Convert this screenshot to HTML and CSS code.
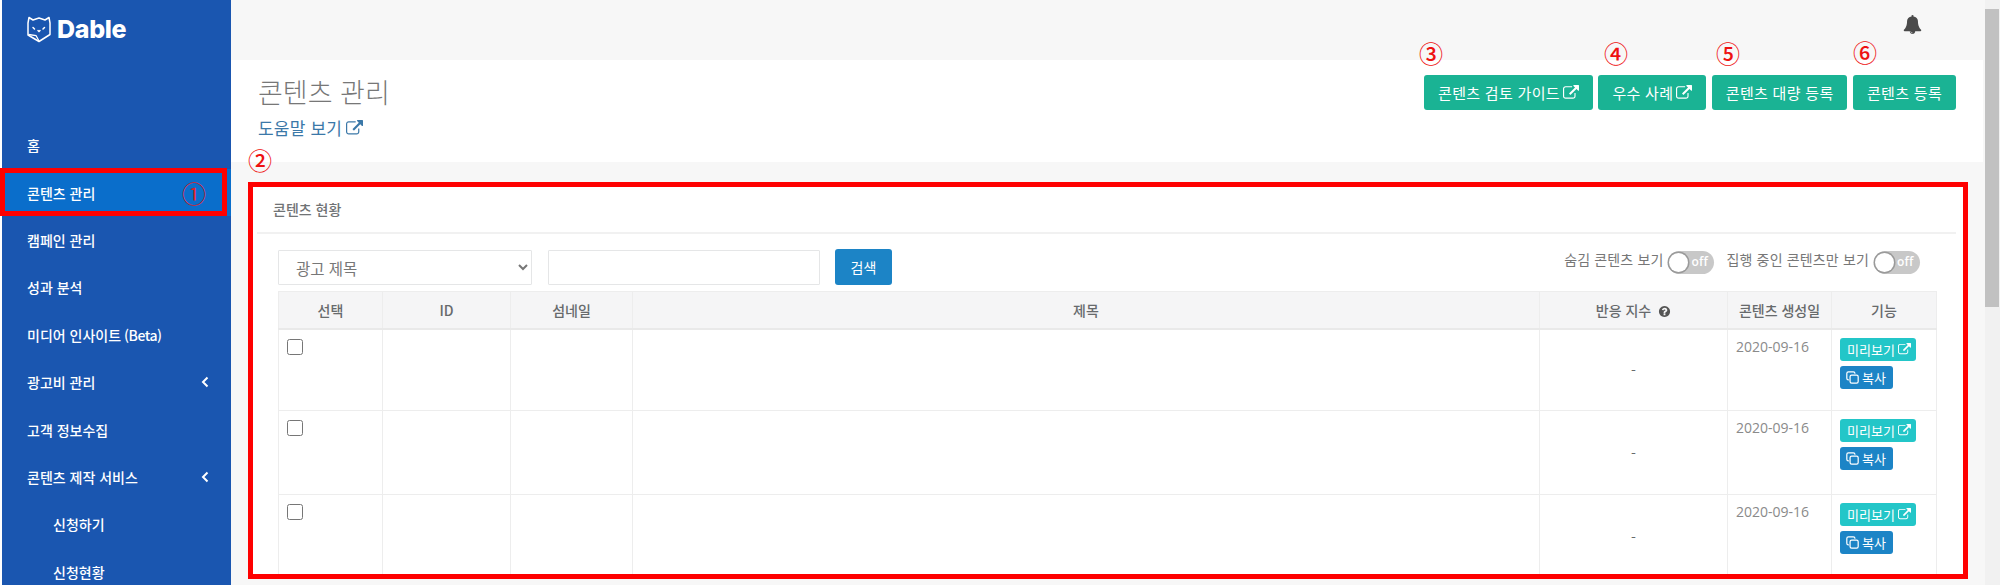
FILE: index.html
```html
<!DOCTYPE html>
<html lang="ko">
<head>
<meta charset="utf-8">
<title>콘텐츠 관리</title>
<link rel="stylesheet" href="styles.css">
</head>
<body>
<svg class="defs" width="0" height="0" aria-hidden="true">
  <symbol id="ext" viewBox="0 0 1792 1792"><path d="M1408 928v320q0 119-84.500 203.500t-203.500 84.500h-832q-119 0-203.500-84.500t-84.500-203.500v-832q0-119 84.500-203.500t203.500-84.500h704q14 0 23 9t9 23v64q0 14-9 23t-23 9h-704q-66 0-113 47t-47 113v832q0 66 47 113t113 47h832q66 0 113-47t47-113v-320q0-14 9-23t23-9h64q14 0 23 9t9 23zm384-864v512q0 26-19 45t-45 19-45-19l-176-176-652 652q-10 10-23 10t-23-10l-114-114q-10-10-10-23t10-23l652-652-176-176q-19-19-19-45t19-45 45-19h512q26 0 45 19t19 45z"/></symbol>
  <symbol id="clone" viewBox="0 0 16 16"><path d="M11 3.500V3a2 2 0 0 0-2-2H3a2 2 0 0 0-2 2v6a2 2 0 0 0 2 2h.5" fill="none" stroke="currentColor" stroke-width="1.500"/><rect x="5" y="5" width="10" height="10" rx="2" fill="none" stroke="currentColor" stroke-width="1.500"/></symbol>
  <symbol id="chev" viewBox="0 0 8 12"><path d="M6.500 1.500 2 6l4.500 4.500" fill="none" stroke="currentColor" stroke-width="2"/></symbol>
</svg>
<div class="app">
  <aside class="sidebar">
    <div class="logo">
      <svg class="logo-mark" viewBox="0 0 24 28" aria-hidden="true"><path d="M2 2.500 6 5 12 3 18 5 22 2.500 23 8V19.500L12 26.500 1 20V8Z" fill="none" stroke="#fff" stroke-width="1.500" stroke-linejoin="round"/><path d="M1.500 19.500 9 20.500 12 26" fill="none" stroke="#fff" stroke-width="1.300"/><path d="M6 12.500 7.500 14M17.500 12.500 16 14M11 15.500l1 1 1-1" fill="none" stroke="#fff" stroke-width="1.500" stroke-linecap="round"/></svg>
      <span class="logo-text">Dable</span>
    </div>
    <nav class="nav">
      <a class="nav-item">홈</a>
      <a class="nav-item active">콘텐츠 관리</a>
      <a class="nav-item">캠페인 관리</a>
      <a class="nav-item">성과 분석</a>
      <a class="nav-item">미디어 인사이트 <span class="beta">(Beta)</span></a>
      <a class="nav-item">광고비 관리<svg class="chev"><use href="#chev"/></svg></a>
      <a class="nav-item">고객 정보수집</a>
      <a class="nav-item">콘텐츠 제작 서비스<svg class="chev"><use href="#chev"/></svg></a>
      <a class="nav-item sub">신청하기</a>
      <a class="nav-item sub">신청현황</a>
    </nav>
  </aside>
  <main class="main">
    <header class="topbar">
      <svg class="bell" viewBox="0 0 1792 1792" aria-hidden="true"><path d="M912 1696q0-16-16-16-59 0-101.500-42.500t-42.500-101.500q0-16-16-16t-16 16q0 73 51.500 124.500t124.500 51.500q16 0 16-16zm816-288q0 52-38 90t-90 38h-448q0 106-75 181t-181 75-181-75-75-181h-448q-52 0-90-38t-38-90q50-42 91-88t85-119.500 74.500-158.500 50-206 19.500-260q0-152 117-282.500t307-158.500q-8-19-8-39 0-40 28-68t68-28 68 28 28 68q0 20-8 39 190 28 307 158.500t117 282.500q0 139 19.500 260t50 206 74.500 158.500 85 119.500 91 88z"/></svg>
    </header>
    <section class="page-head">
      <div class="head-left">
        <h1 class="title">콘텐츠 관리</h1>
        <a class="help">도움말 보기<svg class="ext"><use href="#ext"/></svg></a>
      </div>
      <div class="head-actions">
        <a class="btn">콘텐츠 검토 가이드<svg class="ext"><use href="#ext"/></svg></a>
        <a class="btn">우수 사례<svg class="ext"><use href="#ext"/></svg></a>
        <a class="btn">콘텐츠 대량 등록</a>
        <a class="btn">콘텐츠 등록</a>
      </div>
    </section>
    <section class="card">
      <h2 class="card-title">콘텐츠 현황</h2>
      <div class="card-body">
        <div class="filters">
          <select class="select"><option>광고 제목</option></select>
          <input class="search" type="text" aria-label="검색어">
          <button class="search-btn">검색</button>
          <div class="toggles">
            <span class="toggle-label">숨김 콘텐츠 보기</span>
            <span class="toggle"><i class="knob"></i>off</span>
            <span class="toggle-label second">집행 중인 콘텐츠만 보기</span>
            <span class="toggle"><i class="knob"></i>off</span>
          </div>
        </div>
        <table class="table">
          <colgroup>
            <col class="c1"><col class="c2"><col class="c3"><col class="c4"><col class="c5"><col class="c6"><col class="c7">
          </colgroup>
          <thead>
            <tr>
              <th>선택</th><th>ID</th><th>섬네일</th><th>제목</th>
              <th>반응 지수<svg class="q" viewBox="0 0 1792 1792" aria-hidden="true"><path d="M1024 1376v-192q0-14-9-23t-23-9h-192q-14 0-23 9t-9 23v192q0 14 9 23t23 9h192q14 0 23-9t9-23zm256-672q0-88-55.500-163t-138.500-116-170-41q-243 0-371 213-15 24 8 42l132 100q7 6 19 6 16 0 25-12 53-68 86-92 34-24 86-24 48 0 85.500 26t37.500 59q0 38-20 61t-68 45q-63 28-115.500 86.500t-52.500 125.500v36q0 14 9 23t23 9h192q14 0 23-9t9-23q0-19 21.500-49.500t54.500-49.500q32-18 49-28.500t46-35 44.500-48 28-60.500 12.500-81zm384 192q0 209-103 385.500t-279.500 279.500-385.500 103-385.500-103-279.500-279.500-103-385.500 103-385.500 279.500-279.500 385.500-103 385.500 103 279.500 279.500 103 385.500z"/></svg></th>
              <th>콘텐츠 생성일</th><th>기능</th>
            </tr>
          </thead>
          <tbody>
            <tr class="row1">
              <td><input class="check" type="checkbox" aria-label="선택"></td><td></td><td></td><td></td>
              <td class="score">-</td><td class="date">2020-09-16</td>
              <td class="acts"><a class="mini preview">미리보기<svg class="ext"><use href="#ext"/></svg></a><a class="mini copy"><svg class="clone"><use href="#clone"/></svg>복사</a></td>
            </tr>
            <tr class="row2">
              <td><input class="check" type="checkbox" aria-label="선택"></td><td></td><td></td><td></td>
              <td class="score">-</td><td class="date">2020-09-16</td>
              <td class="acts"><a class="mini preview">미리보기<svg class="ext"><use href="#ext"/></svg></a><a class="mini copy"><svg class="clone"><use href="#clone"/></svg>복사</a></td>
            </tr>
            <tr class="row3">
              <td><input class="check" type="checkbox" aria-label="선택"></td><td></td><td></td><td></td>
              <td class="score">-</td><td class="date">2020-09-16</td>
              <td class="acts"><a class="mini preview">미리보기<svg class="ext"><use href="#ext"/></svg></a><a class="mini copy"><svg class="clone"><use href="#clone"/></svg>복사</a></td>
            </tr>
          </tbody>
        </table>
      </div>
    </section>
  </main>
  <div class="scrollbar"><div class="arrow"></div><div class="thumb"></div></div>

  <div class="mark-box box-nav"></div>
  <div class="mark-box box-card"></div>
  <span class="num n1">①</span>
  <span class="num n2">②</span>
  <span class="num n3">③</span>
  <span class="num n4">④</span>
  <span class="num n5">⑤</span>
  <span class="num n6">⑥</span>
</div>
</body>
</html>
```
FILE: styles.css
```css
* { box-sizing: border-box; }
html, body { margin: 0; height: 585px; overflow: hidden; }
body {
  font-family: "Noto Sans CJK KR", "Open Sans", sans-serif;
  font-size: 14px;
  color: #676a6c;
  background: #fff;
}
.defs { position: absolute; }
.app { position: relative; display: flex; height: 585px; padding-left: 2px; overflow: hidden; background: #fff; }

/* sidebar */
.sidebar { flex: 0 0 229px; background: #1a56b0; color: #fff; }
.logo { display: flex; align-items: flex-start; gap: 6px; height: 121.500px; padding: 15px 0 0 25px; }
.logo-mark { width: 24px; height: 28px; flex: none; }
.logo-text { font-family: Inter, "Liberation Sans", sans-serif; font-weight: 800; font-size: 25px; line-height: 29px; letter-spacing: -0.3px; }
.nav { display: flex; flex-direction: column; }
.nav-item { display: flex; align-items: center; justify-content: space-between; height: 47.400px; padding: 0 22px 0 25px; font-size: 14px; font-weight: 500; color: #fff; white-space: nowrap; }
.nav-item.active { background: #0a6ecb; }
.nav-item.sub { padding-left: 51px; }
.beta { margin-left: 3px; margin-right: auto; letter-spacing: -0.5px; }
.chev { width: 8px; height: 12px; color: #fff; }

/* main */
.main { flex: 1 1 auto; min-width: 0; background: #f7f7f7; }
.topbar { display: flex; justify-content: flex-end; align-items: center; height: 60px; padding: 0 63px 12px 0; }
.bell { width: 19px; height: 19px; fill: #4a4a4a; }
.page-head { display: flex; justify-content: space-between; height: 102px; margin-right: 2px; padding: 14px 27px 0 27px; background: #fff; }
.title { margin: 0; font-size: 27px; line-height: 36px; font-weight: 300; color: #777; }
.help { display: flex; align-items: center; gap: 4px; margin-top: 7px; font-size: 17px; line-height: 22px; letter-spacing: 0.2px; color: #3b78a8; }
.help .ext { width: 17px; height: 17px; fill: #3b78a8; }
.head-actions { display: flex; gap: 5.500px; height: 35px; margin-top: 1px; }
.btn { display: flex; align-items: center; gap: 3px; height: 35px; padding: 0 14px; background: #1ab394; color: #fff; border-radius: 3px; font-size: 15px; letter-spacing: 0.3px; white-space: nowrap; }
.btn .ext { width: 16px; height: 16px; fill: #fff; }

/* card */
.card { margin: 23px 22px 0; padding: 0 7px 0 4px; background: #fff; }
.card-title { margin: 0; height: 49px; padding: 10px 0 0 16px; border-bottom: 2px solid #f1f1f1; font-size: 14px; line-height: 28px; font-weight: 500; color: #707375; }
.card-body { padding: 0 20px 0 21px; }
.filters { display: flex; align-items: flex-start; height: 57px; padding-top: 16px; }
.select { width: 254px; height: 35px; padding-left: 13px; border: 1px solid #e5e6e7; border-radius: 1px; background: #fff; font-family: inherit; font-size: 15.500px; color: #777; }
.search { width: 272px; height: 35px; margin-left: 16px; border: 1px solid #e5e6e7; border-radius: 1px; background: #fff; }
.search-btn { width: 57px; height: 36px; margin-left: 15px; margin-top: -1px; border: 0; border-radius: 3px; background: #1c84c6; color: #fff; font: inherit; padding: 0; }
.toggles { display: flex; align-items: center; margin-left: auto; margin-right: 16px; height: 24px; letter-spacing: 0.15px; }
.toggle-label { line-height: 20px; margin-top: -6px; white-space: nowrap; color: #777; }
.toggle-label.second { margin-left: 12px; }
.toggle { position: relative; display: block; width: 46px; height: 23px; margin-left: 5px; padding-left: 23px; border-radius: 12px; background: #c8c8c8; color: #fff; font-size: 12px; line-height: 22px; font-weight: 600; font-family: "Open Sans", sans-serif; }
.knob { position: absolute; left: 1px; top: 2px; width: 19px; height: 19px; border-radius: 50%; background: #fff; box-shadow: 0 0 0 1.500px #9a9a9a; }

/* table */
.table { width: 1658px; table-layout: fixed; border-collapse: collapse; }
.c1 { width: 104px; } .c2 { width: 128px; } .c3 { width: 122px; } .c4 { width: 907px; } .c5 { width: 188px; } .c6 { width: 104px; } .c7 { width: 105px; }
th, td { border: 1px solid #ededed; vertical-align: top; padding: 0; }
th { height: 37px; background: #f5f5f6; border-bottom: 2px solid #e9e9e9; font-size: 14px; font-weight: 500; text-align: center; vertical-align: middle; color: #676a6c; white-space: nowrap; }
.q { width: 13px; height: 13px; margin-left: 7px; vertical-align: -2px; fill: #555; }
.row1 { height: 82px; } .row2 { height: 84px; } .row3 { height: 84px; }
.check { display: block; width: 16px; height: 16px; margin: 9px 0 0 8px; }
.score { text-align: center; vertical-align: middle; }
.date { padding: 7px 0 0 8px; font-family: "Open Sans", sans-serif; font-size: 14px; line-height: 20px; color: #8a8a8a; }
.acts { padding: 8px 0 0 8px; }
.mini { display: flex; align-items: center; width: max-content; height: 23px; padding: 0 5px 0 7px; border-radius: 3px; color: #fff; font-size: 13px; white-space: nowrap; }
.preview { background: #23c6c8; gap: 3px; }
.copy { margin-top: 5px; background: #1c84c6; gap: 3px; padding: 0 7px 0 6px; }
.mini .ext { width: 13px; height: 13px; fill: #fff; }
.clone { width: 13px; height: 13px; color: #fff; }

/* scrollbar */
.scrollbar { flex: 0 0 15px; background: #f1f1f1; }
.arrow { height: 9px; }
.thumb { width: 14px; height: 298px; background: #c1c1c1; }

/* annotation overlay */
.mark-box { position: absolute; border: 5px solid #fe0000; pointer-events: none; }
.box-nav { left: 0; top: 168px; width: 227px; height: 48px; }
.box-card { left: 248px; top: 182px; width: 1720px; height: 397px; }
.num { position: absolute; width: 24px; text-align: center; margin-left: -12px; font-size: 24px; line-height: 24px; color: #ee1111; font-weight: 500; }
.n1 { left: 194px; top: 181px; color: #d9232e; font-weight: 400; }
.n2 { left: 260px; top: 148px; }
.n3 { left: 1431px; top: 41px; }
.n4 { left: 1616px; top: 41px; }
.n5 { left: 1728px; top: 41px; }
.n6 { left: 1865px; top: 40px; }
```
